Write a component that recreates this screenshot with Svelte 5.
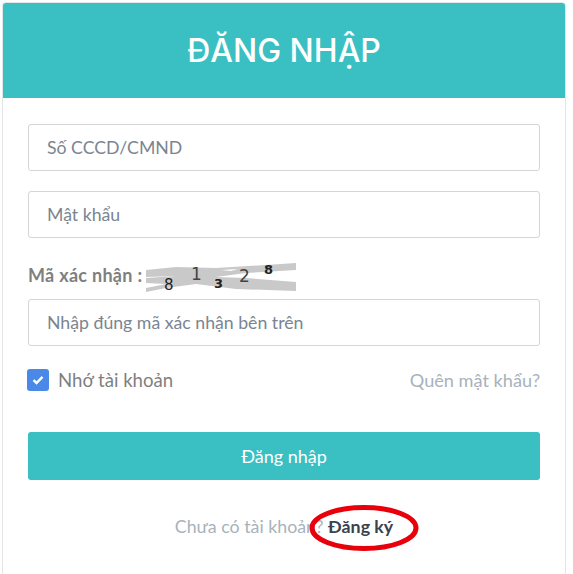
<script>
  let username = '';
  let password = '';
  let captcha = '';
  let remember = true;
</script>

<div class="page">
  <div class="card">
    <div class="card-header">
      <h1>ĐĂNG NHẬP</h1>
    </div>

    <form class="card-body" on:submit|preventDefault>
      <input class="field first" type="text" placeholder="Số CCCD/CMND" bind:value={username} />
      <input class="field" type="password" placeholder="Mật khẩu" bind:value={password} />

      <div class="captcha-row">
        <span class="captcha-label">Mã xác nhận :</span>
        <svg class="captcha" width="150" height="32" viewBox="0 0 150 32">
          <polygon points="0,7 30,4 70,5 150,0 150,7 100,10 70,14 100,15 150,19 150,28 90,26 50,21 20,25 0,29 0,25 20,21 0,20 0,15 30,13 0,14" fill="#c9c9c9" />
          <polygon points="75,7 92,6 85,8" fill="white" />
          <text x="18" y="27" class="digit">8</text>
          <text x="45" y="17" class="digit thin">1</text>
          <text x="68" y="25" class="digit small">3</text>
          <text x="93" y="19" class="digit thin">2</text>
          <text x="118" y="11" class="digit small">8</text>
        </svg>
      </div>
      <input class="field after-captcha" type="text" placeholder="Nhập đúng mã xác nhận bên trên" bind:value={captcha} />

      <div class="options">
        <label class="remember">
          <input type="checkbox" bind:checked={remember} />
          <span class="box">
            <svg width="12" height="10" viewBox="0 0 12 10">
              <path d="M1.5 5.2 L4.5 8 L10.5 1.8" fill="none" stroke="white" stroke-width="2.4" />
            </svg>
          </span>
          Nhớ tài khoản
        </label>
        <a class="forgot" href="#forgot">Quên mật khẩu?</a>
      </div>

      <button class="submit" type="submit">Đăng nhập</button>

      <p class="signup">
        Chưa có tài khoản? <a href="#signup">Đăng ký</a>
        <svg class="circle" width="112" height="50" viewBox="0 0 112 50">
          <ellipse cx="56" cy="25" rx="52" ry="20.5" fill="none" stroke="#e8000b" stroke-width="5" />
        </svg>
      </p>
    </form>
  </div>
</div>

<style>
  :global(body) {
    background: white;
    font-family: Lato, "Liberation Sans", sans-serif;
  }

  .page {
    padding: 2px 7px 0 2px;
    height: 572px;
    overflow: hidden;
  }

  .card {
    border: 1px solid #e3e6e8;
    border-bottom: none;
    border-radius: 4px 4px 0 0;
    height: 572px;
    box-sizing: border-box;
  }

  .card-header {
    background: #3abfc3;
    height: 95px;
    display: flex;
    align-items: center;
    justify-content: center;
    border-radius: 3px 3px 0 0;
  }

  .card-header h1 {
    margin: 0;
    color: white;
    font-family: Inter, sans-serif;
    font-size: 32px;
    font-weight: 500;
  }

  .card-body {
    padding: 26px 25px 0 25px;
    display: flex;
    flex-direction: column;
  }

  .field {
    height: 47px;
    width: 100%;
    box-sizing: border-box;
    border: 1px solid #d3d5d7;
    border-radius: 3px;
    padding: 0 18px;
    font-family: Lato, sans-serif;
    font-size: 17.7px;
    color: #6b7785;
    background: white;
    margin-top: 20px;
  }

  .field.first {
    margin-top: 0;
  }

  .field.after-captcha {
    margin-top: 7px;
  }

  .field::placeholder {
    color: #7a8591;
    opacity: 1;
  }

  .captcha-row {
    display: flex;
    align-items: center;
    height: 34px;
    gap: 4px;
    margin-top: 20px;
  }

  .captcha-label {
    font-size: 18px;
    font-weight: 700;
    letter-spacing: 0.3px;
    color: #7f7f7f;
  }

  .captcha {
    margin-top: 8px;
    flex-shrink: 0;
  }

  .digit {
    font-family: "DejaVu Sans", sans-serif;
    font-size: 15px;
    font-weight: 400;
    fill: #222;
  }

  .digit.thin {
    font-size: 17px;
    font-weight: 400;
    fill: #444;
  }

  .digit.small {
    font-size: 13px;
    font-weight: 700;
    fill: #222;
  }

  .options {
    display: flex;
    justify-content: space-between;
    align-items: center;
    margin-top: 22px;
    height: 24px;
  }

  .remember {
    display: flex;
    align-items: center;
    gap: 9px;
    font-size: 18.6px;
    color: #7f7f7f;
    cursor: pointer;
  }

  .remember input {
    display: none;
  }

  .box {
    width: 22px;
    height: 22px;
    margin-left: -1px;
    border-radius: 3px;
    background: #4a89e8;
    display: flex;
    align-items: center;
    justify-content: center;
  }

  .forgot {
    font-size: 18.15px;
    color: #a8b2bb;
    text-decoration: none;
  }

  .submit {
    margin-top: 40px;
    height: 48px;
    border: none;
    border-radius: 3px;
    background: #3abfc3;
    color: white;
    font-family: Lato, sans-serif;
    font-size: 18px;
    cursor: pointer;
  }

  .signup {
    position: relative;
    width: fit-content;
    margin: 35px auto 0;
    font-size: 17.8px;
    color: #a8b2bb;
  }

  .signup a {
    color: #3a4250;
    font-weight: 700;
    text-decoration: none;
  }

  .circle {
    position: absolute;
    right: -27px;
    top: -12px;
  }
</style>
